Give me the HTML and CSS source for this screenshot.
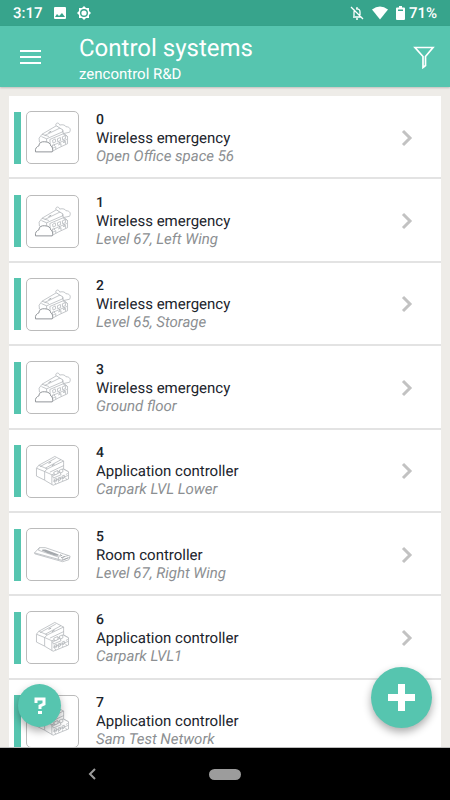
FILE: index.html
```html
<!DOCTYPE html>
<html lang="en">
<head>
<meta charset="utf-8">
<meta name="viewport" content="width=device-width, initial-scale=1">
<title>Control systems</title>
<link rel="stylesheet" href="styles.css">
</head>
<body>
<svg class="defs" aria-hidden="true">
  <symbol id="controller" viewBox="0 0 156 156">
    <path d="M29 68 36 59 85 32 112 46 112 70 127 79 127 101 80 120 53 104 29 92Z"/>
    <path d="M29 68 54 78 54 104M54 78 76 88 76 118M36 59 62 70 112 46M62 70 54 78M40 63 88 37M56 68 104 42M76 88 112 71 127 79M70 80 112 60M78 91 102 80 104 88 81 98Z"/>
    <path d="M66 53 74 49M76 60 84 56" stroke-width="3"/>
    <path d="M82 80 94 75 95 84 84 89ZM99 74 109 70 110 79 101 83ZM80 108 126 90M83 102 90 99 90 108 84 111ZM95 98 102 95 102 104 96 107ZM107 92 114 89 114 98 108 101ZM119 87 125 84M86 113 88 117M96 108 98 112M108 103 110 107M118 97 121 103" stroke-width="2"/>
  </symbol>
  <symbol id="wireless" viewBox="0 0 156 156">
    <path d="M38 92 37 80 46 68 90 42 111 54 108 61 124 75 124 97 96 110 78 120 60 100Z"/>
    <path d="M108 61 60 82 44 75M60 82 60 91M54 72 103 48M46 68 67 75M70 84 71 99M78 120 78 100M70 84 110 67 124 75"/>
    <path d="M88 41C88 31 98 32 100 40 110 37 118 41 119 45 132 45 135 54 130 62L111 66 110 55Z"/>
    <path d="M78 87 86 82 88 91 80 95ZM93 82 102 78 103 87 94 91ZM108 76 117 72 118 81 109 85ZM79 102 122 84M80 110 88 106 88 114M95 101 104 97 104 105M110 94 118 90 118 99M83 98 84 104M100 92 100 98M113 86 114 94" stroke-width="2"/>
    <path d="M66 63 74 59" stroke-width="3"/>
    <path d="M26 122C24 111 30 106 36 104 37 94 44 90 54 91 65 91 72 96 73 104 80 108 80 118 77 122Z" stroke="#909498" stroke-width="3"/>
  </symbol>
  <symbol id="room" viewBox="0 0 156 156">
    <path d="M23 73 38 57 56 57 132 83 128 94 109 100 24 76ZM23 73 108 96 127 88 132 88M38 57 35 65 97 86 104 76M97 86 95 94M108 96 110 86 126 81"/>
    <path d="M47 65 56 65 96 80 86 80ZM53 65 91 79M58 70 85 79" stroke-width="4"/>
    <path d="M101 83 108 80M104 88 116 84M111 94 126 88" stroke-width="3"/>
  </symbol>
  <symbol id="chevron" viewBox="0 0 12 18"><path d="M2 2 9 9 2 16"/></symbol>
</svg>
<div class="app">
  <div class="status">
    <div class="status-group">
      <span class="time">3:17</span>
      <svg class="status-icon" viewBox="0 0 14 14"><path fill="#fff" fill-rule="evenodd" d="M2 1H12Q13 1 13 2V12Q13 13 12 13H2Q1 13 1 12V2Q1 1 2 1ZM2 11H12L9 7 6 10 4 8Z"/></svg>
      <svg class="status-icon" viewBox="0 0 14 14"><path fill="#fff" fill-rule="evenodd" d="M7 0 9 2H12V5L14 7 12 9V12H9L7 14 5 12H2V9L0 7 2 5V2H5ZM7 3A4 4 0 1 0 7 11 4 4 0 0 0 7 3ZM7 4.400A2.600 2.600 0 1 1 7 9.600 2.600 2.600 0 0 1 7 4.400Z"/></svg>
    </div>
    <div class="status-group status-right">
      <svg class="status-icon" viewBox="0 0 14 14" fill="none" stroke="#fff" stroke-width="1.300"><path d="M1 1 13 13M3 11H11M4 10V6Q4 4.500 5 4M6 3Q10 2.500 10 6V9M7 1V3M6 13H8"/></svg>
      <svg class="wifi" viewBox="0 0 16 14"><path fill="#fff" d="M0 3.500Q8-2.500 16 3.500L8 13.500Z"/></svg>
      <svg class="battery" viewBox="0 0 9 14"><path fill="#fff" fill-rule="evenodd" d="M3 0H6V1.500H8Q9 1.500 9 2.500V13Q9 14 8 14H1Q0 14 0 13V2.500Q0 1.500 1 1.500H3ZM2 3.500V5H7V3.500Z"/></svg>
      <span class="charge">71%</span>
    </div>
  </div>
  <header class="header">
    <button class="icon-button" aria-label="Menu"><svg class="menu-icon" viewBox="0 0 21 16"><path d="M0 2H21M0 8H21M0 14H21" stroke="#fff" stroke-width="2"/></svg></button>
    <div class="heading">
      <h1>Control systems</h1>
      <p>zencontrol R&amp;D</p>
    </div>
    <button class="icon-button" aria-label="Filter"><svg class="filter-icon" viewBox="0 0 22 24"><path d="M2 2.500H20L12.500 11.500V20.500L10 22.500V11.500Z" fill="none" stroke="#fff" stroke-width="1.700"/></svg></button>
  </header>
  <main class="content">
    <ul class="list">
      <li><a class="row" href="#"><svg class="thumb"><use href="#wireless"/></svg><span class="text"><b>0</b><span>Wireless emergency</span><i>Open Office space 56</i></span><svg class="chevron"><use href="#chevron"/></svg></a></li>
      <li><a class="row" href="#"><svg class="thumb"><use href="#wireless"/></svg><span class="text"><b>1</b><span>Wireless emergency</span><i>Level 67, Left Wing</i></span><svg class="chevron"><use href="#chevron"/></svg></a></li>
      <li><a class="row" href="#"><svg class="thumb"><use href="#wireless"/></svg><span class="text"><b>2</b><span>Wireless emergency</span><i>Level 65, Storage</i></span><svg class="chevron"><use href="#chevron"/></svg></a></li>
      <li><a class="row" href="#"><svg class="thumb"><use href="#wireless"/></svg><span class="text"><b>3</b><span>Wireless emergency</span><i>Ground floor</i></span><svg class="chevron"><use href="#chevron"/></svg></a></li>
      <li><a class="row" href="#"><svg class="thumb"><use href="#controller"/></svg><span class="text"><b>4</b><span>Application controller</span><i>Carpark LVL Lower</i></span><svg class="chevron"><use href="#chevron"/></svg></a></li>
      <li><a class="row" href="#"><svg class="thumb"><use href="#room"/></svg><span class="text"><b>5</b><span>Room controller</span><i>Level 67, Right Wing</i></span><svg class="chevron"><use href="#chevron"/></svg></a></li>
      <li><a class="row" href="#"><svg class="thumb"><use href="#controller"/></svg><span class="text"><b>6</b><span>Application controller</span><i>Carpark LVL1</i></span><svg class="chevron"><use href="#chevron"/></svg></a></li>
      <li><a class="row" href="#"><svg class="thumb"><use href="#controller"/></svg><span class="text"><b>7</b><span>Application controller</span><i>Sam Test Network</i></span></a></li>
    </ul>
    <button class="fab help" aria-label="Help"><svg viewBox="0 0 12 18"><path d="M2 6V2H10V7L6 9V12" fill="none" stroke="#fff" stroke-width="3"/><path d="M4 14H8V17H4Z" fill="#fff"/></svg></button>
    <button class="fab add" aria-label="Add"><svg viewBox="0 0 28 28"><path d="M10 0H17V10H27V17H17V27H10V17H0V10H10Z" fill="#fff"/></svg></button>
  </main>
  <nav class="nav">
    <button class="icon-button" aria-label="Back"><svg class="back" viewBox="0 0 8 12"><path d="M7 1 2 6 7 11" fill="none" stroke="#9c9c9c" stroke-width="2"/></svg></button>
    <button class="home" aria-label="Home"></button>
  </nav>
</div>
</body>
</html>
```
FILE: styles.css
```css
* {
  box-sizing: border-box;
}

body,
h1,
p,
ul {
  margin: 0;
  padding: 0;
}

body {
  font-family: Roboto, "Liberation Sans", sans-serif;
  color: #1b242c;
  text-rendering: geometricPrecision;
}

button {
  padding: 0;
  border: 0;
  background: none;
}

svg {
  display: block;
}

.defs {
  display: none;
}

.app {
  display: flex;
  flex-direction: column;
  height: 100vh;
  overflow: hidden;
  background: #eeece8;
}

.status {
  display: flex;
  justify-content: space-between;
  align-items: center;
  flex: none;
  height: 26px;
  padding: 0 13px;
  background: #37a48c;
  color: #fff;
  font-size: 15px;
  font-weight: 500;
}

.status-group {
  display: flex;
  align-items: center;
  gap: 10px;
}

.status-right {
  gap: 8px;
}

.time {
  width: 30px;
}

.status-icon {
  width: 14px;
  height: 14px;
}

.wifi {
  width: 16px;
  height: 14px;
}

.battery {
  width: 9px;
  height: 14px;
}

.charge {
  margin-left: -4px;
}

.header {
  display: flex;
  align-items: center;
  flex: none;
  height: 61px;
  padding: 0 15px 0 20px;
  background: #56c5af;
  color: #fff;
  box-shadow: 0 1px 2px #0003;
  z-index: 1;
}

.heading {
  flex: 1;
  margin-left: 38px;
  padding-top: 5px;
}

.heading h1 {
  font-size: 24px;
  font-weight: 400;
  line-height: 30px;
}

.heading p {
  font-size: 15px;
  line-height: 22px;
}

.menu-icon {
  width: 21px;
  height: 16px;
}

.filter-icon {
  width: 22px;
  height: 24px;
}

.content {
  position: relative;
  flex: 1;
  min-height: 0;
  overflow: hidden;
  padding: 9px 9px 0;
}

.list {
  display: grid;
  grid-auto-rows: 1fr;
  min-height: 667px;
  list-style: none;
  background: #fff;
}

.list li {
  border-bottom: 2px solid #e3e3e3;
}

.row {
  display: flex;
  align-items: center;
  height: 100%;
  padding: 2px 28px 0 5px;
  color: inherit;
  text-decoration: none;
}

.row::before {
  content: "";
  width: 7px;
  height: 52px;
  margin-right: 5px;
  background: #56c5af;
}

.thumb {
  flex: none;
  width: 53px;
  height: 53px;
  border: 1px solid #bbb;
  border-radius: 5px;
  fill: #fff;
  stroke: #a5a9ad;
  stroke-width: 2;
}

.text {
  display: flex;
  flex-direction: column;
  flex: 1;
  margin-left: 17px;
  font-size: 15px;
  line-height: 18px;
}

.text b {
  font-size: 14px;
  font-weight: 500;
}

.text i {
  color: #8c8f92;
}

.chevron {
  width: 12px;
  height: 18px;
  fill: none;
  stroke: #c2c2c2;
  stroke-width: 3;
}

.fab {
  position: absolute;
  display: grid;
  place-items: center;
  border-radius: 50%;
  background: #56c5af;
  box-shadow: 0 4px 9px #0005;
}

.help {
  left: 18px;
  bottom: 20px;
  width: 43px;
  height: 43px;
}

.help svg {
  width: 12px;
  height: 18px;
}

.add {
  right: 18px;
  bottom: 19px;
  width: 61px;
  height: 61px;
}

.add svg {
  width: 28px;
  height: 28px;
}

.nav {
  display: grid;
  grid-template-columns: 1fr auto 1fr;
  align-items: center;
  flex: none;
  height: 53px;
  padding: 0 88px;
  border-top: 1px solid #bbb;
  background: #000;
}

.nav .icon-button {
  justify-self: start;
}

.back {
  width: 8px;
  height: 12px;
}

.home {
  width: 32px;
  height: 11px;
  border-radius: 6px;
  background: #9c9c9c;
}
```
